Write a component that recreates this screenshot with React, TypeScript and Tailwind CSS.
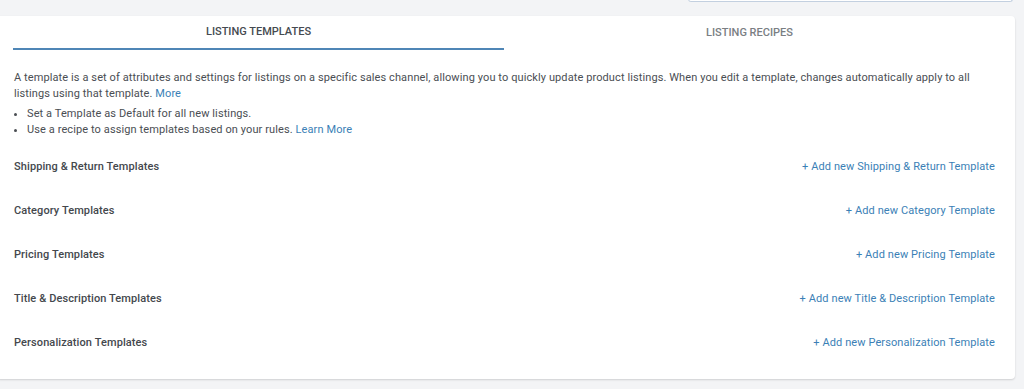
import React from "react";

const rows = [
  ["Shipping & Return Templates", "+ Add new Shipping & Return Template"],
  ["Category Templates", "+ Add new Category Template"],
  ["Pricing Templates", "+ Add new Pricing Template"],
  ["Title & Description Templates", "+ Add new Title & Description Template"],
  ["Personalization Templates", "+ Add new Personalization Template"],
];

export default function App() {
  return (
    <div
      className="w-[1024px] h-[389px] bg-[#f3f4f6] overflow-hidden flex flex-col"
      style={{ fontFamily: "Roboto, 'Open Sans', sans-serif" }}
    >
      <div className="h-[16px] flex justify-end pr-[11px]">
        <div className="w-[325px] h-[3px] -mt-[1px] border border-t-0 border-[#c3d0e0] rounded-b-[4px] bg-white" />
      </div>
      <div className="ml-[-4px] w-[1019px] h-[363px] bg-white rounded-[4px] shadow-[0_1px_2px_rgba(0,0,0,0.15)] pl-[17px] pr-[20px]">
        <div className="flex h-[34px]">
          <div className="w-[491px] flex items-center justify-center border-b-2 border-[#4f86b6] text-[11px] font-medium text-[#454a50] pt-[1px]">
            LISTING TEMPLATES
          </div>
          <div className="w-[491px] flex items-center justify-center text-[11px] font-medium text-[#7a7e83] pt-[1px]">
            LISTING RECIPES
          </div>
        </div>
        <div className="pt-[20px] pl-[1px] text-[11px] leading-[16px] tracking-[0.1px] text-[#4a4e53]">
          <p>
            A template is a set of attributes and settings for listings on a specific sales channel, allowing you to quickly update product listings. When you edit a template, changes automatically apply to all listings using that template.{" "}
            <span className="text-[#3b7fb6]">More</span>
          </p>
          <ul className="mt-[4px] list-disc pl-[13px]">
            <li>Set a Template as Default for all new listings.</li>
            <li>
              Use a recipe to assign templates based on your rules.{" "}
              <span className="text-[#3b7fb6]">Learn More</span>
            </li>
          </ul>
        </div>
        <div className="mt-[21px] flex flex-col gap-[28px]">
          {rows.map(([label, link]) => (
            <div key={label} className="flex justify-between items-center h-[16px] text-[11px] leading-[16px] tracking-[0.1px] pl-[1px]">
              <span className="font-medium text-[#44484d]">{label}</span>
              <span className="text-[#3b7fb6]">{link}</span>
            </div>
          ))}
        </div>
      </div>
    </div>
  );
}
